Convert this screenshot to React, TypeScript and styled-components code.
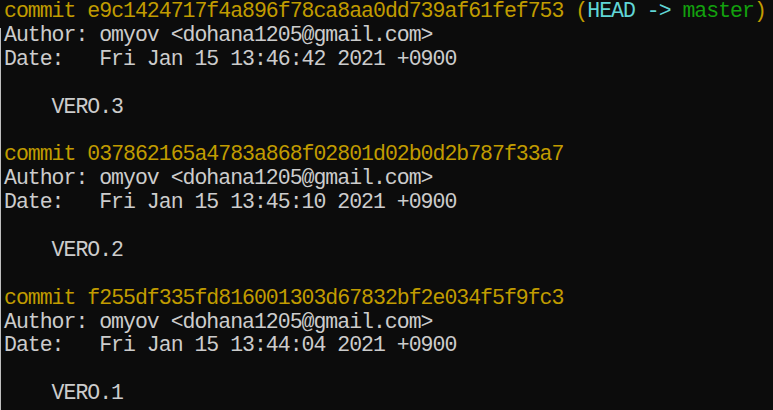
import React from "react";
import styled, { createGlobalStyle } from "styled-components";

const Global = createGlobalStyle`
  html, body { margin: 0; padding: 0; background: #0c0c0c; }
  body { width: 773px; height: 410px; overflow: hidden; }
`;

const Terminal = styled.div`
  position: relative;
  width: 773px;
  height: 410px;
  box-sizing: border-box;
  background: #0c0c0c;
  padding: 0 0 0 4px;
  overflow: hidden;
  font-family: "Liberation Mono", "DejaVu Sans Mono", monospace;
  font-size: 21.5px;
  letter-spacing: -1px;
  line-height: 23.9px;
  color: #cccccc;
  &::before {
    content: "";
    position: absolute;
    left: 0;
    top: 28px;
    bottom: 0;
    width: 1px;
    background: #bfbfbf;
  }
`;

const Line = styled.div`
  white-space: pre;
  height: 23.9px;
`;

type Tone = "yellow" | "cyan" | "green" | "white";
const toneColor: Record<Tone, string> = {
  yellow: "#c19c00",
  cyan: "#61d6d6",
  green: "#13a10e",
  white: "#cccccc",
};

const Span = styled.span<{ $tone: Tone }>`
  color: ${(p) => toneColor[p.$tone]};
`;

const commits = [
  { hash: "e9c1424717f4a896f78ca8aa0dd739af61fef753", date: "Fri Jan 15 13:46:42 2021 +0900", msg: "VERO.3", head: true },
  { hash: "037862165a4783a868f02801d02b0d2b787f33a7", date: "Fri Jan 15 13:45:10 2021 +0900", msg: "VERO.2", head: false },
  { hash: "f255df335fd816001303d67832bf2e034f5f9fc3", date: "Fri Jan 15 13:44:04 2021 +0900", msg: "VERO.1", head: false },
];

export default function App() {
  return (
    <>
      <Global />
      <Terminal>
        {commits.map((c, i) => (
          <React.Fragment key={c.hash}>
            {i > 0 && <Line> </Line>}
            <Line>
              <Span $tone="yellow">commit {c.hash}</Span>
              {c.head && (
                <>
                  <Span $tone="yellow"> (</Span>
                  <Span $tone="cyan">HEAD -&gt; </Span>
                  <Span $tone="green">master</Span>
                  <Span $tone="yellow">)</Span>
                </>
              )}
            </Line>
            <Line>Author: omyov &lt;dohana1205@gmail.com&gt;</Line>
            <Line>{"Date:   " + c.date}</Line>
            <Line> </Line>
            <Line>{"    " + c.msg}</Line>
          </React.Fragment>
        ))}
      </Terminal>
    </>
  );
}
